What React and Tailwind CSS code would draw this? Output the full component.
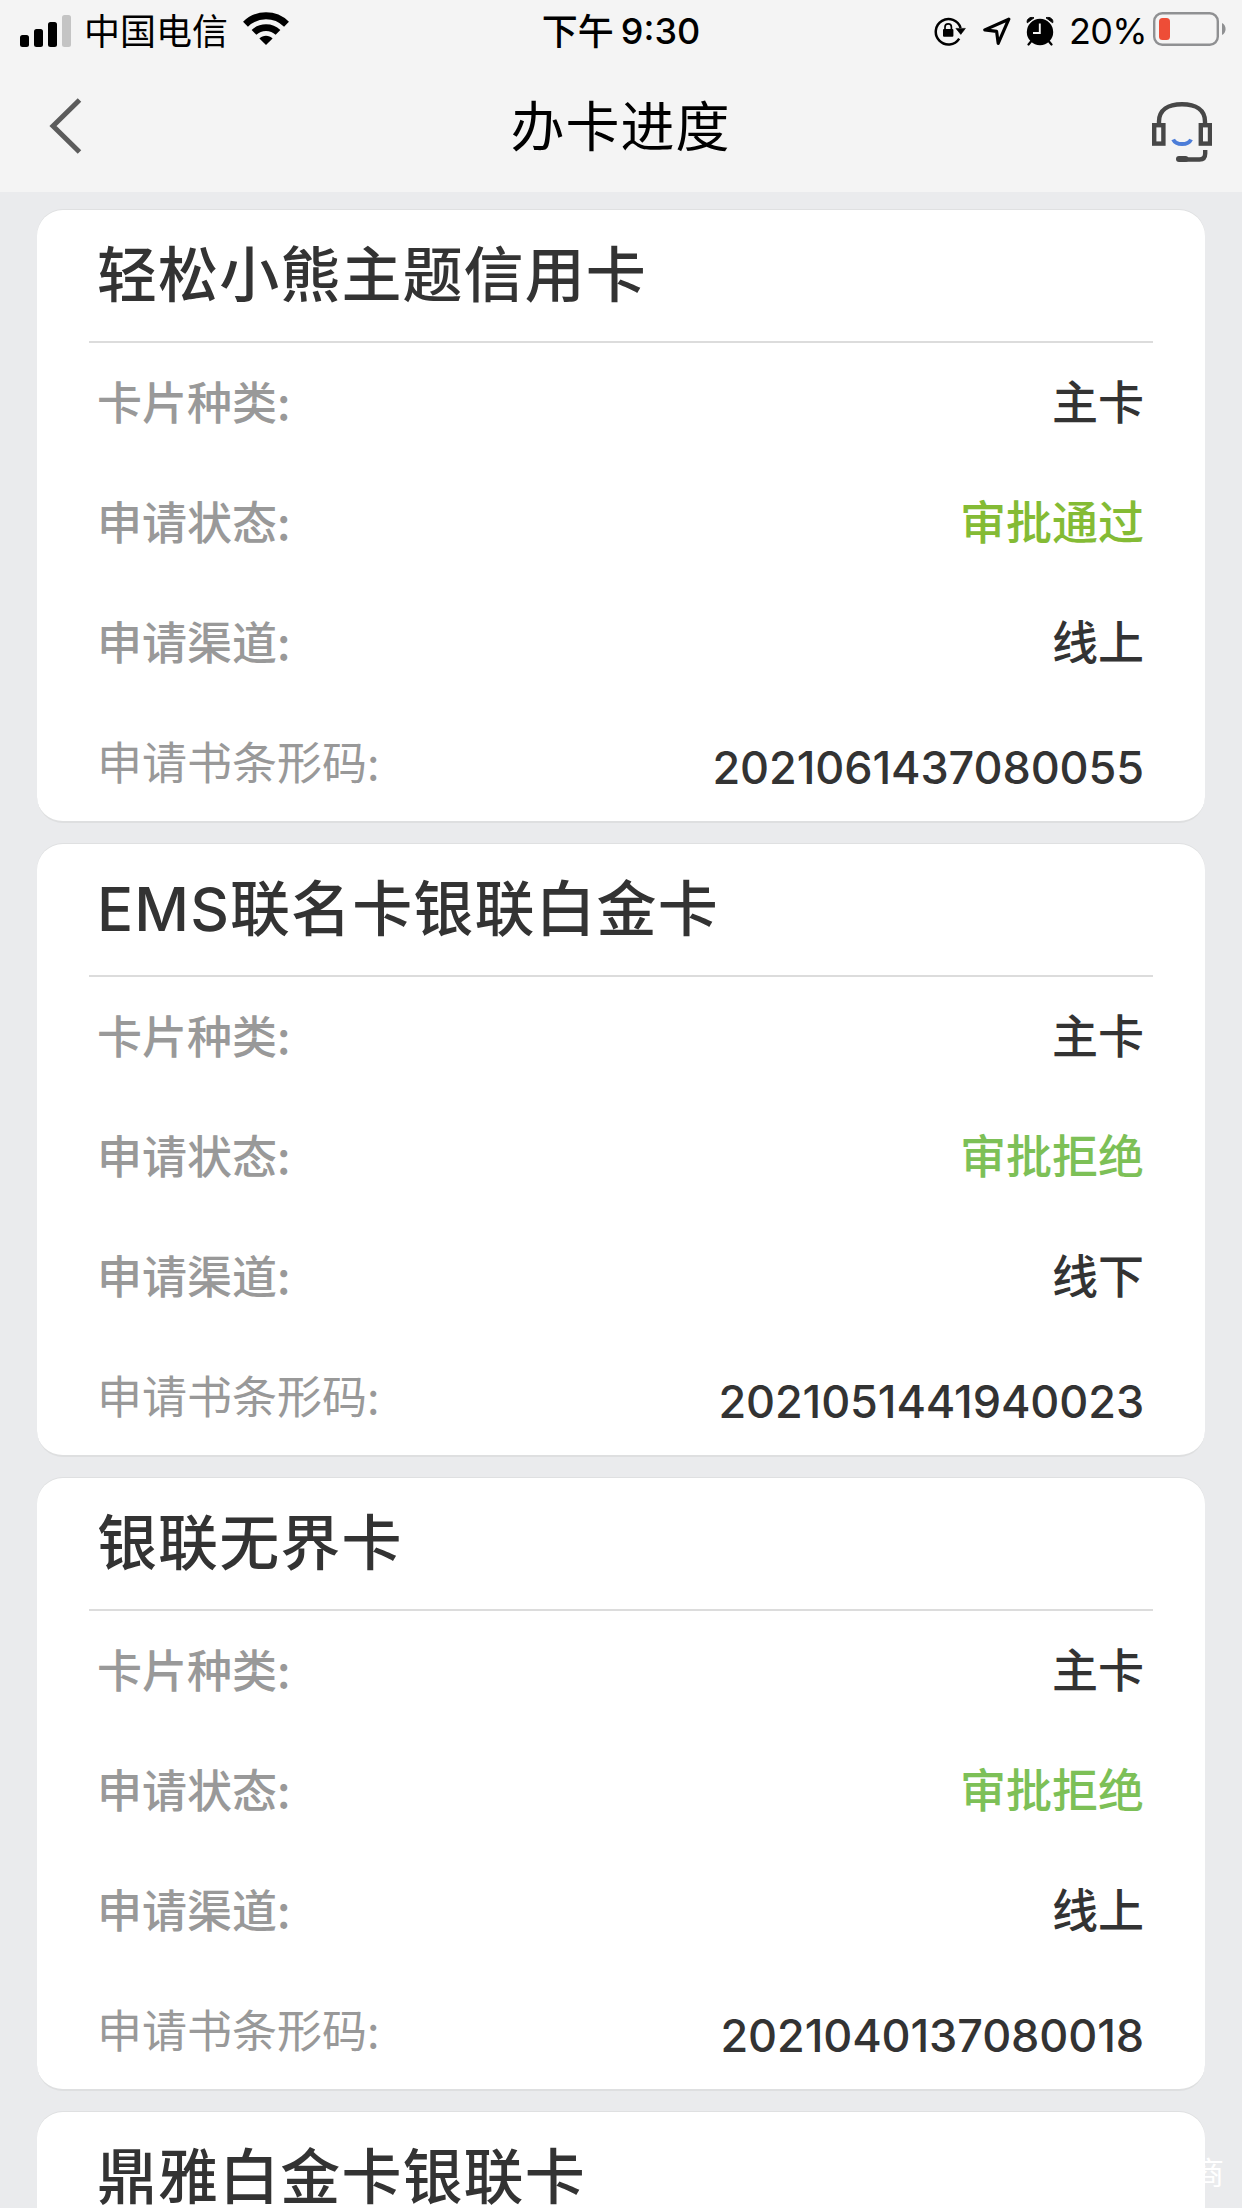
const cards = [
  { name: "轻松小熊主题信用卡", type: "主卡", status: "审批通过", statusColor: "text-[#84bb35]", channel: "线上", barcode: "2021061437080055" },
  { name: "EMS联名卡银联白金卡", type: "主卡", status: "审批拒绝", statusColor: "text-[#7dc057]", channel: "线下", barcode: "2021051441940023" },
  { name: "银联无界卡", type: "主卡", status: "审批拒绝", statusColor: "text-[#7dc057]", channel: "线上", barcode: "2021040137080018" },
];

const SignalIcon = () => (
  <svg className="w-[52px] h-[34px]" viewBox="0 0 52 34">
    <rect x="0" y="21" width="9" height="12" rx="2.5" />
    <rect x="14" y="15" width="9" height="18" rx="2.5" />
    <rect x="28" y="8" width="9" height="25" rx="2.5" />
    <rect x="42" y="1" width="9" height="32" rx="2.5" fill="#c4c4c4" />
  </svg>
);

const WifiIcon = () => (
  <svg className="w-[46px] h-[34px]" viewBox="0 0 46 34" fill="none" stroke="#000">
    <path d="M2.5 12.2C14 1 32 1 43.5 12.2" strokeWidth="7" />
    <path d="M11 20.4C17.6 14 28.4 14 35 20.4" strokeWidth="6.8" />
    <path d="M16.4 26.6C20 22.8 26 22.8 29.6 26.6L23 33Z" fill="#000" stroke="none" />
  </svg>
);

const RotationLockIcon = () => (
  <svg className="w-8 h-[30px]" viewBox="0 0 32 30" fill="none" stroke="#000">
    <path d="M25.2 22.6A12.7 12.7 0 1 1 26.6 12" strokeWidth="2.5" />
    <path d="M21.9 12.4H31.4L26.8 18.4Z" fill="#000" strokeWidth=".6" />
    <rect x="9" y="13" width="10.4" height="7.8" rx="1" fill="#000" stroke="none" />
    <path d="M11 13.5V11a3.2 3.2 0 0 1 6.4 0V13.5" strokeWidth="1.7" />
  </svg>
);

const LocationIcon = () => (
  <svg className="w-[28px] h-[29px]" viewBox="0 0 28 29" fill="none" stroke="#000" strokeWidth="3.2" strokeLinejoin="round">
    <path d="M25.8 2.2L1.8 12.9L13.6 14.4L15.2 26.4Z" />
  </svg>
);

const AlarmIcon = () => (
  <svg className="w-[28px] h-[30px]" viewBox="0 0 28 30">
    <circle cx="14" cy="16" r="13.2" />
    <path d="M1.3 6.8C.3 3.2 4 .4 8 1.8ZM26.7 6.8C27.7 3.2 24 .4 20 1.8Z" stroke="#000" strokeLinejoin="round" />
    <path d="M5 25.5L2.5 28.5M23 25.5L25.5 28.5" stroke="#000" strokeWidth="2.2" strokeLinecap="round" />
    <path d="M13.8 7.5V17H7" fill="none" stroke="#f4f4f4" strokeWidth="1.9" />
  </svg>
);

const BatteryIcon = () => (
  <svg className="w-[74px] h-[34px]" viewBox="0 0 74 34">
    <rect x="1.2" y="1.2" width="63.6" height="31.6" rx="8" fill="none" stroke="#8f9092" strokeWidth="2.4" />
    <rect x="6" y="6" width="11" height="22" rx="3.5" fill="#ee4d37" />
    <path d="M69 11C73.8 13 73.8 21 69 23Z" fill="#8f9092" />
  </svg>
);

const HeadsetIcon = () => (
  <svg className="w-[60px] h-[61px]" viewBox="0 0 60 61" fill="none" stroke="#474747" strokeWidth="4.4">
    <path d="M7 22V19.5C7 8 16 2.3 30 2.3S53 8 53 19.5V22" />
    <rect x="2.2" y="23.2" width="9.2" height="18.4" />
    <rect x="48.8" y="23.2" width="9.2" height="18.4" />
    <path d="M21.2 37.5C24 43.6 36.2 43.6 39 37.5" stroke="#4c7dd8" strokeWidth="4" />
    <path d="M53.200 48V51.500Q53.200 57.500 47.500 57.500H34" strokeWidth="4.400" />
    <path d="M27 57H33.500" strokeWidth="6" strokeLinecap="round" />
  </svg>
);

const StatusBar = () => (
  <div className="grid grid-cols-[1fr_auto_1fr] items-center h-[62px] pl-5 pr-[15px] text-[36px] leading-none">
    <div className="flex items-center">
      <SignalIcon />
      <span className="ml-[12px] pb-[4px] w-[146px] whitespace-nowrap">中国电信</span>
      <span className="ml-[13px] -mt-1">
        <WifiIcon />
      </span>
    </div>
    <div className="font-medium flex items-center gap-[7px] pr-[5px]">
      <span className="pb-[4px]">下午</span>
      <span className="font-[Inter]">9:30</span>
    </div>
    <div className="flex items-center justify-end">
      <RotationLockIcon />
      <span className="ml-[17px]">
        <LocationIcon />
      </span>
      <span className="ml-[15px]">
        <AlarmIcon />
      </span>
      <span className="ml-[15px] font-[Inter] tracking-[-0.7px]">20%</span>
      <span className="ml-[6px] -mt-1">
        <BatteryIcon />
      </span>
    </div>
  </div>
);

const NavBar = () => (
  <div className="grid grid-cols-[1fr_auto_1fr] items-center h-[130px] pl-[49px] pr-[30px]">
    <button type="button" className="justify-self-start pb-[2px]">
      <svg className="w-[33px] h-[56px]" viewBox="0 0 33 56" fill="none" stroke="#5c5c5c" strokeWidth="5">
        <path d="M30.5 2L4 28L30.5 54" />
      </svg>
    </button>
    <h1 className="text-[54px] tracking-[1px] leading-none pr-[20px] pb-[6px]">办卡进度</h1>
    <button type="button" className="justify-self-end pt-[10px]">
      <HeadsetIcon />
    </button>
  </div>
);

const Row = ({ label, light, children }) => (
  <div className="flex items-center justify-between h-[120px] pl-2 pr-[9px] pb-[7px]">
    <span className={`text-[45px] pt-px text-[#999] ${light ? "font-normal" : "font-medium"}`}>{label}:</span>
    {children}
  </div>
);

const CardTitle = ({ children }) => (
  <h2 className="flex items-center h-[133px] pl-2 pb-[2px] border-b-2 border-[#dcdcdc] font-[Inter,'Noto_Sans_CJK_SC',sans-serif] text-[60px] tracking-[1.1px] leading-none font-medium text-[#333]">
    {children}
  </h2>
);

const Card = ({ card }) => (
  <section className="h-[613px] shrink-0 rounded-[26px] bg-white border-b-2 border-[#dedfe0] px-[52px] shadow-[0_-1px_0_#dfe0e1]">
    <CardTitle>{card.name}</CardTitle>
    <div className="text-[46px] leading-none font-medium text-[#333]">
      <Row label="卡片种类">
        <span className="pb-[2px]">{card.type}</span>
      </Row>
      <Row label="申请状态">
        <span className={`pb-[2px] ${card.statusColor}`}>{card.status}</span>
      </Row>
      <Row label="申请渠道">
        <span className="pb-[2px]">{card.channel}</span>
      </Row>
      <Row label="申请书条形码" light>
        <span className="font-[Inter] text-[45px] tracking-[-0.1px] pt-[15px]">{card.barcode}</span>
      </Row>
    </div>
  </section>
);

export default function App() {
  return (
    <div className="relative w-[1242px] h-[2208px] overflow-hidden flex flex-col bg-[#eaebed] text-black font-['Noto_Sans_CJK_SC',sans-serif]">
      <header className="shrink-0 bg-[#f4f4f4]">
        <StatusBar />
        <NavBar />
      </header>
      <main className="flex flex-1 flex-col gap-[21px] px-[37px] pt-[18px]">
        {cards.map((card) => (
          <Card key={card.barcode} card={card} />
        ))}
        {/* next card, only its title fits on the screen */}
        <section className="h-24 shrink-0 rounded-t-[26px] bg-white px-[52px] shadow-[0_-1px_0_#dfe0e1]">
          <CardTitle>鼎雅白金卡银联卡</CardTitle>
        </section>
      </main>
      {/* watermark, cut off by the card edge */}
      <span className="absolute right-[18px] bottom-[22px] text-[31px] leading-none text-white">商</span>
    </div>
  );
}
